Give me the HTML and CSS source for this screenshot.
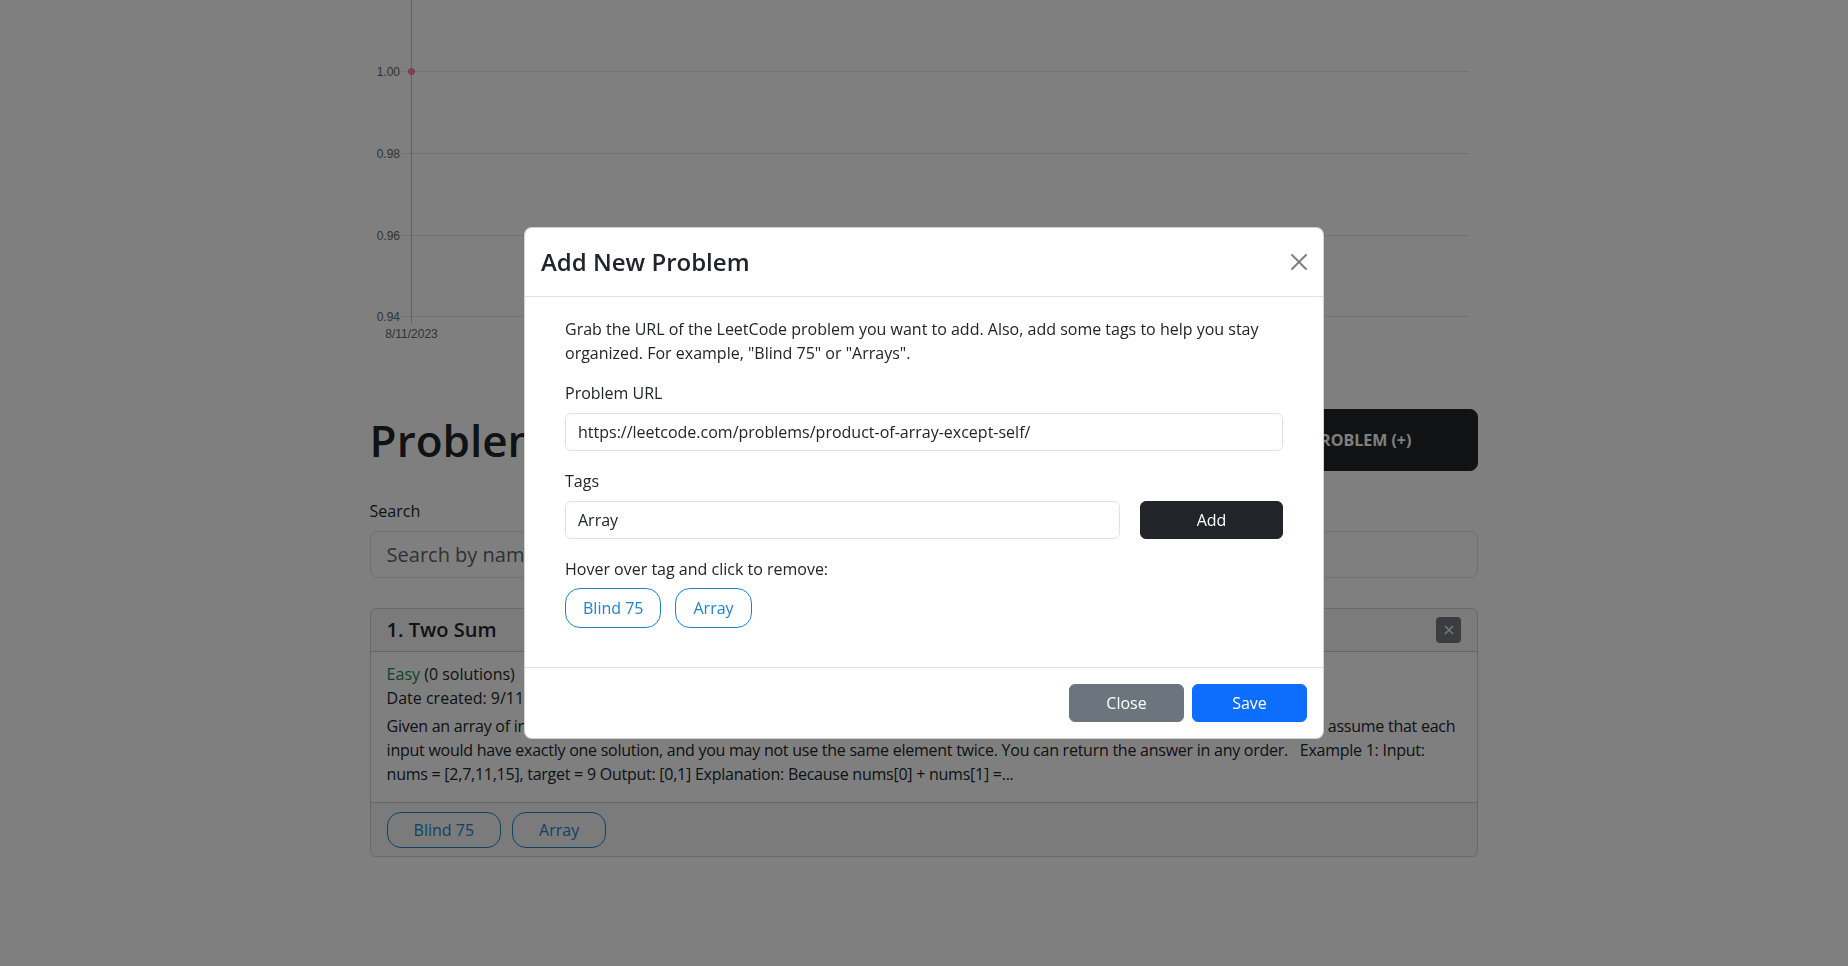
FILE: index.html
```html
<!DOCTYPE html>
<html lang="en">
<head>
<meta charset="utf-8">
<title>Problems</title>
<link rel="stylesheet" href="styles.css">
</head>
<body>
<main class="page">
  <div class="chart">
    <svg class="chart-svg" width="1108" height="345" viewBox="0 0 1108 345">
      <g class="grid">
        <line x1="32" y1="71.5" x2="1099" y2="71.5"/>
        <line x1="32" y1="153.5" x2="1099" y2="153.5"/>
        <line x1="32" y1="235.5" x2="1099" y2="235.5"/>
        <line x1="32" y1="316.5" x2="1099" y2="316.5"/>
      </g>
      <line class="axis" x1="41.5" y1="0" x2="41.5" y2="324"/>
      <g class="ticks">
        <text x="30" y="75.5">1.00</text>
        <text x="30" y="157.5">0.98</text>
        <text x="30" y="239.5">0.96</text>
        <text x="30" y="320.5">0.94</text>
      </g>
      <text class="xtick" x="41.5" y="337.5">8/11/2023</text>
      <circle class="point" cx="41.5" cy="71.5" r="3"/>
    </svg>
  </div>

  <div class="heading-row">
    <h1 class="page-title">Problems</h1>
    <button class="btn-add-problem" type="button">Add problem (+)</button>
  </div>

  <div class="search">
    <label class="search-label" for="search">Search</label>
    <input class="search-input" id="search" type="text" placeholder="Search by name">
  </div>

  <div class="card">
    <div class="card-header">
      <h5 class="card-title">1. Two Sum</h5>
      <button class="card-remove" type="button" aria-label="Remove">
        <svg width="10" height="10" viewBox="0 0 10 10"><path d="M1 1 L9 9 M9 1 L1 9"/></svg>
      </button>
    </div>
    <div class="card-body">
      <div class="meta"><span class="easy">Easy</span> (0 solutions)</div>
      <div class="meta">Date created: 9/11/2023</div>
      <p class="desc">Given an array of integers nums and an integer target, return indices of the two numbers such that they add up to target. You may assume that each input would have exactly one solution, and you may not use the same element twice. You can return the answer in any order. &nbsp; Example 1: Input: nums = [2,7,11,15], target = 9 Output: [0,1] Explanation: Because nums[0] + nums[1] =...</p>
    </div>
    <div class="card-footer">
      <span class="tag tag-card">Blind 75</span>
      <span class="tag tag-card">Array</span>
    </div>
  </div>
</main>

<div class="backdrop"></div>

<div class="modal-wrap">
  <div class="modal">
    <div class="modal-header">
      <h4 class="modal-title">Add New Problem</h4>
      <button class="btn-close" type="button" aria-label="Close">
        <svg width="16" height="16" viewBox="0 0 16 16"><path d="M.293.293a1 1 0 0 1 1.414 0L8 6.586 14.293.293a1 1 0 1 1 1.414 1.414L9.414 8l6.293 6.293a1 1 0 0 1-1.414 1.414L8 9.414l-6.293 6.293a1 1 0 0 1-1.414-1.414L6.586 8 .293 1.707a1 1 0 0 1 0-1.414z"/></svg>
      </button>
    </div>
    <div class="modal-body">
      <p class="intro">Grab the URL of the LeetCode problem you want to add. Also, add some tags to help you stay organized. For example, "Blind 75" or "Arrays".</p>
      <div class="field">
        <label class="field-label" for="url">Problem URL</label>
        <input class="field-input" id="url" type="text" value="https://leetcode.com/problems/product-of-array-except-self/">
      </div>
      <div class="field">
        <label class="field-label" for="tags">Tags</label>
        <div class="tag-row">
          <input class="field-input" id="tags" type="text" value="Array">
          <button class="btn-add" type="button">Add</button>
        </div>
      </div>
      <div class="hint">Hover over tag and click to remove:</div>
      <div class="tag-list">
        <span class="tag tag-modal">Blind 75</span>
        <span class="tag tag-modal">Array</span>
      </div>
    </div>
    <div class="modal-footer">
      <button class="btn btn-secondary" type="button">Close</button>
      <button class="btn btn-primary" type="button">Save</button>
    </div>
  </div>
</div>
</body>
</html>
```

FILE: styles.css
```css
* { box-sizing: border-box; }

html, body {
  margin: 0;
  padding: 0;
  background: #fff;
  font-family: "Open Sans", "Noto Sans", "Liberation Sans", sans-serif;
  font-size: 16px;
  line-height: 1.5;
  color: #212529;
}

button, input {
  font-family: inherit;
}

.page {
  width: 60%;
  margin: 0 auto;
}

/* chart */
.chart {
  height: 345px;
}
.chart-svg {
  display: block;
}
.grid line {
  stroke: rgba(0, 0, 0, 0.1);
  stroke-width: 1;
}
.axis {
  stroke: rgba(0, 0, 0, 0.22);
  stroke-width: 1;
}
.ticks text,
.xtick {
  font-family: "Liberation Sans", Arial, sans-serif;
  font-size: 12px;
  fill: #666;
}
.ticks text { text-anchor: end; }
.xtick { text-anchor: middle; }
.point {
  fill: rgba(255, 99, 132, 0.7);
  stroke: rgb(255, 99, 132);
  stroke-width: 1;
}

/* heading */
.heading-row {
  margin-top: 64px;
  display: flex;
  justify-content: space-between;
  align-items: center;
}
.page-title {
  margin: 0;
  font-size: 44px;
  font-weight: 600;
  line-height: 1.2;
}
.btn-add-problem {
  padding: 18px 66px;
  border: 1px solid #212529;
  background: #212529;
  color: #fff;
  border-radius: 8px;
  font-size: 16px;
  font-weight: 700;
  line-height: 24px;
  text-transform: uppercase;
}

/* search */
.search {
  margin-top: 28px;
}
.search-label {
  display: block;
  margin-bottom: 8px;
}
.search-input {
  display: block;
  width: 100%;
  height: 47px;
  padding: 7px 16px;
  font-size: 20px;
  line-height: 30px;
  color: #212529;
  border: 1px solid #dee2e6;
  border-radius: 8px;
  background: #fff;
}
.search-input::placeholder { color: #5c636a; }

/* card */
.card {
  margin-top: 30px;
  border: 1px solid rgba(0, 0, 0, 0.175);
  border-radius: 6px;
  overflow: hidden;
}
.card-header {
  display: flex;
  justify-content: space-between;
  align-items: center;
  padding: 8px 16px;
  background: rgba(0, 0, 0, 0.03);
  border-bottom: 1px solid rgba(0, 0, 0, 0.175);
}
.card-title {
  margin: 0;
  font-size: 20px;
  font-weight: 600;
  line-height: 24px;
}
.card-remove {
  width: 25px;
  height: 26px;
  padding: 0;
  border: 0;
  border-radius: 4px;
  background: #75797e;
  display: flex;
  align-items: center;
  justify-content: center;
}
.card-remove path {
  stroke: #eef0f2;
  stroke-width: 1.6;
  fill: none;
}
.card-body {
  padding: 10px 16px 16px;
}
.easy {
  color: #198754;
}
.desc {
  margin: 4px 0 0;
  letter-spacing: -0.25px;
}
.card-footer {
  display: flex;
  gap: 11px;
  padding: 9px 16px 8px;
  background: rgba(0, 0, 0, 0.03);
  border-top: 1px solid rgba(0, 0, 0, 0.175);
}

/* tags */
.tag {
  display: inline-block;
  border: 1px solid #1d84cc;
  color: #1d84cc;
  line-height: 24px;
  background: #fff;
}
.tag-card {
  padding: 5px 26px;
  border-radius: 14px;
  background: transparent;
}
.tag-modal {
  padding: 7px 17px;
  border-radius: 15px;
}

/* backdrop + modal */
.backdrop {
  position: fixed;
  inset: 0;
  background: rgba(0, 0, 0, 0.5);
}
.modal-wrap {
  position: fixed;
  inset: 0;
  display: flex;
  align-items: center;
  justify-content: center;
}
.modal {
  width: 800px;
  background: #fff;
  border: 1px solid rgba(0, 0, 0, 0.175);
  border-radius: 8px;
}
.modal-header {
  display: flex;
  align-items: center;
  justify-content: space-between;
  padding: 16px;
  border-bottom: 1px solid #dee2e6;
}
.modal-title {
  margin: 0;
  font-size: 24px;
  font-weight: 600;
  line-height: 36px;
}
.btn-close {
  width: 16px;
  height: 16px;
  padding: 0;
  border: 0;
  background: transparent;
  display: flex;
}
.btn-close path {
  fill: #000;
  opacity: 0.5;
}
.modal-body {
  padding: 20px 40px 39px;
}
.intro {
  margin: 0 0 16px;
}
.field {
  margin-bottom: 18px;
}
.field-label {
  display: block;
  margin-bottom: 8px;
}
.field-input {
  display: block;
  width: 100%;
  height: 38px;
  padding: 6px 12px;
  font-size: 16px;
  line-height: 24px;
  color: #212529;
  border: 1px solid #dee2e6;
  border-radius: 6px;
  background: #fff;
}
.tag-row {
  display: grid;
  grid-template-columns: 1fr 143px;
  gap: 20px;
}
.btn-add {
  height: 38px;
  border: 1px solid #212529;
  background: #212529;
  color: #fff;
  border-radius: 6px;
  font-size: 16px;
  line-height: 24px;
}
.hint {
  margin-bottom: 7px;
}
.tag-list {
  display: flex;
  gap: 14px;
}
.modal-footer {
  display: flex;
  justify-content: flex-end;
  padding: 12px;
  border-top: 1px solid #dee2e6;
}
.btn {
  width: 115px;
  height: 38px;
  margin: 4px;
  border: 1px solid transparent;
  border-radius: 6px;
  color: #fff;
  font-size: 16px;
  line-height: 24px;
}
.btn-secondary {
  background: #6c757d;
  border-color: #6c757d;
}
.btn-primary {
  background: #0d6efd;
  border-color: #0d6efd;
}
```
